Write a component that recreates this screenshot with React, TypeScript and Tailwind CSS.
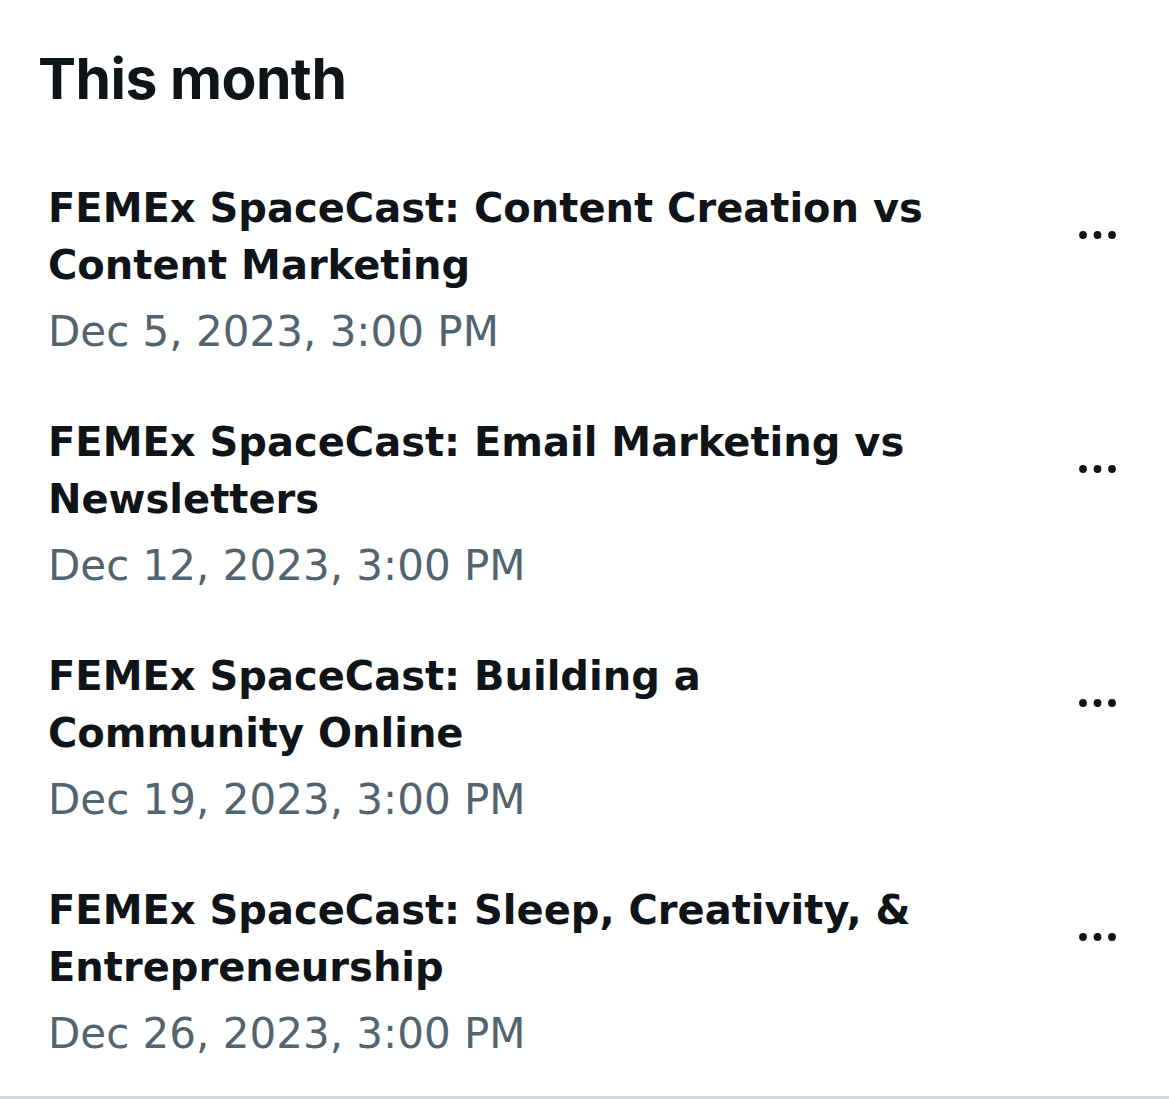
const items = [
  { title: "FEMEx SpaceCast: Content Creation vs Content Marketing", date: "Dec 5, 2023, 3:00 PM" },
  { title: "FEMEx SpaceCast: Email Marketing vs Newsletters", date: "Dec 12, 2023, 3:00 PM" },
  { title: "FEMEx SpaceCast: Building a Community Online", date: "Dec 19, 2023, 3:00 PM" },
  { title: "FEMEx SpaceCast: Sleep, Creativity, & Entrepreneurship", date: "Dec 26, 2023, 3:00 PM" },
];

const Dots = () => (
  <svg width="37" height="8" viewBox="0 0 37 8" fill="#0f1419">
    <circle cx="4" cy="4" r="3.9" />
    <circle cx="18.5" cy="4" r="3.9" />
    <circle cx="33" cy="4" r="3.9" />
  </svg>
);

export default function App() {
  return (
    <div className="min-h-[1099px] bg-white text-[#0f1419]">
      <div className="border-b-[3px] border-[#cfd9de] pb-[9px] pt-[45px]">
        <h2 className="pl-[38px] font-['Inter',sans-serif] text-[57px] font-bold leading-[68px] tracking-[-0.5px]">
          This month
        </h2>
        <div className="mt-[38px] font-['DejaVu_Sans',sans-serif]">
          {items.map((it) => (
            <div key={it.date} className="flex h-[234px] pl-[48px] pr-[53px] pt-[29px]">
              <div className="w-[900px]">
                <div className="text-[40px] font-bold leading-[57px]">{it.title}</div>
                <div className="mt-[7px] text-[42px] leading-[62px] text-[#536471]">{it.date}</div>
              </div>
              <div className="ml-auto flex h-[110px] items-center">
                <Dots />
              </div>
            </div>
          ))}
        </div>
      </div>
    </div>
  );
}
